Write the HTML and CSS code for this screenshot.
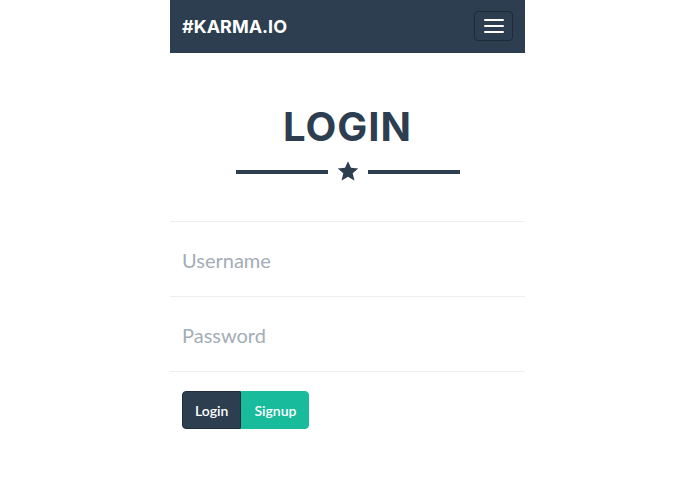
FILE: index.html
```html
<!DOCTYPE html>
<html lang="en">
<head>
    <meta charset="UTF-8">
    <meta name="viewport" content="width=device-width, initial-scale=1.0">
    <title>Karma.io - Login</title>
    <link rel="stylesheet" href="styles.css">
</head>
<body>
    <div id="page">
        <nav id="navbar">
            <a class="brand" href="#">#KARMA.IO</a>
            <button class="navToggle" type="button">
                <span class="iconBar"></span>
                <span class="iconBar"></span>
                <span class="iconBar"></span>
            </button>
        </nav>

        <section id="login">
            <h2 class="heading">LOGIN</h2>
            <div class="starDivider">
                <span class="dividerLine"></span>
                <svg class="star" viewBox="0 0 24 24" width="24" height="23">
                    <path d="M12 1.2l3.1 7 7.6.7-5.8 5 1.8 7.5L12 17.4 5.3 21.4l1.8-7.5-5.8-5 7.6-.7z" fill="#2c3e50"/>
                </svg>
                <span class="dividerLine"></span>
            </div>

            <form id="loginForm">
                <div class="formGroup">
                    <input type="text" name="username" placeholder="Username">
                </div>
                <div class="formGroup">
                    <input type="password" name="password" placeholder="Password">
                </div>
                <div class="buttonGroup">
                    <button class="btn btnDark" type="submit">Login</button>
                    <button class="btn btnGreen" type="button">Signup</button>
                </div>
            </form>
        </section>
    </div>
</body>
</html>
```

FILE: styles.css
```css
* {
    box-sizing: border-box;
}

body {
    margin: 0;
    background-color: #ffffff;
    font-family: Lato, "Open Sans", sans-serif;
    color: #2c3e50;
}

#page {
    width: 355px;
    margin: 0 auto;
}

#navbar {
    height: 53px;
    padding: 0 12px;
    background-color: #2c3e50;
    display: flex;
    justify-content: space-between;
    align-items: center;
}

.brand {
    font-family: Inter, sans-serif;
    font-weight: 700;
    font-size: 18px;
    color: #ffffff;
    text-decoration: none;
    margin-top: -1px;
}

.navToggle {
    width: 39px;
    height: 30px;
    margin-top: -1px;
    padding: 0;
    background-color: #2c3e50;
    border: 1px solid #1d2a37;
    border-radius: 4px;
    display: flex;
    flex-direction: column;
    align-items: center;
    justify-content: center;
    gap: 4px;
}

.iconBar {
    display: block;
    width: 20px;
    height: 2px;
    background-color: #ffffff;
    border-radius: 1px;
}

.heading {
    margin: 50px 0 0;
    font-family: Inter, sans-serif;
    font-weight: 700;
    font-size: 40px;
    line-height: 48px;
    text-align: center;
    letter-spacing: 1px;
}

.starDivider {
    margin-top: 9px;
    height: 23px;
    display: flex;
    justify-content: center;
    align-items: center;
}

.dividerLine {
    width: 92px;
    height: 4px;
    background-color: #2c3e50;
    margin-top: 1px;
}

.star {
    margin: 0 8px;
}

#loginForm {
    margin-top: 38px;
}

.formGroup {
    border-bottom: 1px solid #eeeeee;
}

.formGroup:first-child {
    border-top: 1px solid #eeeeee;
}

.formGroup input {
    display: block;
    width: 100%;
    height: 74px;
    padding: 1px 12px 0;
    border: none;
    outline: none;
    background: transparent;
    font-family: Lato, sans-serif;
    font-size: 20px;
    color: #2c3e50;
}

.formGroup input::placeholder {
    color: #a3adb7;
}

.buttonGroup {
    display: flex;
    margin: 19px 0 0 12px;
}

.btn {
    height: 38px;
    padding: 0 12px;
    border: 1px solid transparent;
    font-family: Lato, sans-serif;
    font-weight: 600;
    font-size: 14px;
    color: #ffffff;
}

.btnDark {
    background-color: #2c3e50;
    border-color: #1f2d3b;
    border-radius: 4px 0 0 4px;
}

.btnGreen {
    background-color: #18bc9c;
    border-color: #18bc9c;
    border-radius: 0 4px 4px 0;
}
```
